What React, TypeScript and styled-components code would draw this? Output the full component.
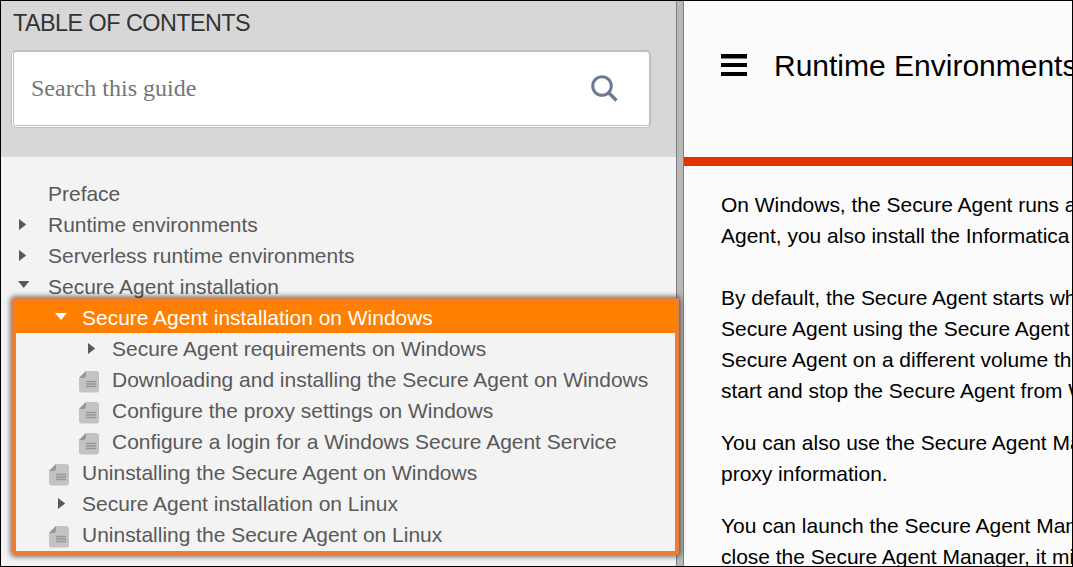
import React from "react";
import styled, { createGlobalStyle } from "styled-components";

const Global = createGlobalStyle`
  *, *::before, *::after { box-sizing: border-box; }
  body { margin: 0; overflow: hidden; }
`;

const Page = styled.div`
  position: relative;
  display: flex;
  width: 1073px;
  height: 567px;
  border: 1px solid #000;
  overflow: hidden;
  background: #fbfbfb;
  font-family: "Liberation Sans", Arial, sans-serif;
  font-size: 20.98px;
  line-height: 31px;
  white-space: nowrap;
`;

const Sidebar = styled.aside`
  flex: 0 0 675px;
  display: flex;
  flex-direction: column;
  background: #f3f3f3;
`;

const SidebarHeader = styled.header`
  flex: 0 0 156px;
  padding: 8px 0 0 10px;
  background: #d7d7d7;
`;

const SidebarTitle = styled.h2`
  margin: 0 0 13px;
  padding-left: 2px;
  font-size: 23.4px;
  font-weight: 400;
  line-height: 28px;
  letter-spacing: -0.55px;
  color: #333;
`;

const SearchBox = styled.label`
  display: flex;
  align-items: center;
  justify-content: space-between;
  width: 640px;
  height: 78px;
  padding: 0 31px 0 17px;
  border: 3px double #bac0ca;
  border-top: 2px solid #bac0ca;
  border-right: 2px solid #bac0ca;
  border-radius: 5px;
  background: #fff;
`;

const SearchInput = styled.input`
  width: 400px;
  padding: 0;
  border: 0;
  outline: 0;
  background: transparent;
  font: 24px "Liberation Serif", "Times New Roman", serif;
  &::placeholder { color: #757575; opacity: 1; }
`;

const SearchIcon = styled.svg`
  flex: none;
  margin-bottom: 2px;
`;

const Tree = styled.ul`
  margin: 0;
  padding: 21px 0 0;
  list-style: none;
`;

const TreeRow = styled.li<{ $level: number; $active?: boolean }>`
  display: flex;
  height: 31px;
  margin-left: ${(p) => (p.$active ? 13 : 0)}px;
  padding-left: ${(p) => [8, 42, 72][p.$level] - (p.$active ? 13 : 0)}px;
  background: ${(p) => (p.$active ? "#ff7f00" : "transparent")};
  color: ${(p) => (p.$active ? "#fff" : "#595959")};
`;

const Marker = styled.span`
  flex: none;
  width: 39px;
  height: 31px;
`;

const Divider = styled.div`
  flex: 0 0 8px;
  border: solid #808080;
  border-width: 0 1px;
  background: #b8b8b8;
`;

const Main = styled.main`
  flex: 1;
  min-width: 0;
  overflow: hidden;
`;

const Banner = styled.header`
  display: flex;
  align-items: center;
  gap: 27px;
  height: 165px;
  padding: 0 0 26px 37px;
  border-bottom: 9px solid #e13200;
`;

const MenuIcon = styled.svg`
  flex: none;
  margin-bottom: 2px;
`;

const Heading = styled.h1`
  margin: 0;
  font-size: 30px;
  font-weight: 400;
  line-height: 42px;
  color: #000;
`;

const Article = styled.article`
  padding: 23px 0 0 37px;
  color: #000;
`;

const Paragraph = styled.p<{ $gap?: number }>`
  margin: 0 0 ${(p) => p.$gap ?? 21}px;
`;

const Callout = styled.div`
  position: absolute;
  left: 11px;
  top: 297px;
  width: 667px;
  height: 257px;
  border: 4px solid #ed7d31;
  border-radius: 3px;
  box-shadow: 0 0 5px 2px rgba(0, 0, 0, 0.5);
  pointer-events: none;
`;

type Kind = "none" | "closed" | "open" | "page";

const MarkerIcon = ({ kind, level }: { kind: Kind; level: number }) => {
  if (kind === "none") return null;
  return (
    <svg width="39" height="31" viewBox="0 0 39 31" fill="currentColor" display="block">
      {kind === "closed" && <path d={level ? "M15 10v11l7.2-5.5z" : "M10 10v11l7.2-5.5z"} />}
      {kind === "open" && (
        <path d={level ? "M12 11h12l-6 7z" : "M9 10h11.4l-5.7 7z"} />
      )}
      {kind === "page" && (
        <g>
          <path d="M13 7h10.2a2.8 2.8 0 0 1 2.8 2.8v16a2.8 2.8 0 0 1-2.8 2.8H8.8a2.8 2.8 0 0 1-2.8-2.8V14z" fill="#c3c3c3" />
          <path d="M13 7v4a3 3 0 0 1-3 3H6z" fill="#969696" />
          <path d="M13 17.5h10.3M13 20h10.3M13 22.5h10.3" stroke="#969696" strokeWidth="1.5" />
        </g>
      )}
    </svg>
  );
};

const rows: { text: string; kind: Kind; level: number; active?: boolean }[] = [
  { text: "Preface", kind: "none", level: 0 },
  { text: "Runtime environments", kind: "closed", level: 0 },
  { text: "Serverless runtime environments", kind: "closed", level: 0 },
  { text: "Secure Agent installation", kind: "open", level: 0 },
  { text: "Secure Agent installation on Windows", kind: "open", level: 1, active: true },
  { text: "Secure Agent requirements on Windows", kind: "closed", level: 2 },
  { text: "Downloading and installing the Secure Agent on Windows", kind: "page", level: 2 },
  { text: "Configure the proxy settings on Windows", kind: "page", level: 2 },
  { text: "Configure a login for a Windows Secure Agent Service", kind: "page", level: 2 },
  { text: "Uninstalling the Secure Agent on Windows", kind: "page", level: 1 },
  { text: "Secure Agent installation on Linux", kind: "closed", level: 1 },
  { text: "Uninstalling the Secure Agent on Linux", kind: "page", level: 1 },
];

const paragraphs: { lines: string[]; gap?: number }[] = [
  { lines: ["On Windows, the Secure Agent runs a", "Agent, you also install the Informatica"], gap: 31 },
  {
    lines: [
      "By default, the Secure Agent starts wh",
      "Secure Agent using the Secure Agent",
      "Secure Agent on a different volume th",
      "start and stop the Secure Agent from W",
    ],
  },
  { lines: ["You can also use the Secure Agent Ma", "proxy information."] },
  { lines: ["You can launch the Secure Agent Man", "close the Secure Agent Manager, it mi"] },
];

export default function App() {
  return (
    <>
      <Global />
      <Page>
        <Sidebar>
          <SidebarHeader>
            <SidebarTitle>TABLE OF CONTENTS</SidebarTitle>
            <SearchBox>
              <SearchInput placeholder="Search this guide" />
              <SearchIcon width="28" height="28" viewBox="0 0 28 28" fill="none" stroke="#6c7d93" strokeWidth="3">
                <circle cx="12" cy="12" r="9.3" />
                <path d="M18.5 18.5l8 8" strokeWidth="3.4" />
              </SearchIcon>
            </SearchBox>
          </SidebarHeader>
          <Tree>
            {rows.map((row) => (
              <TreeRow key={row.text} $level={row.level} $active={row.active}>
                <Marker>
                  <MarkerIcon kind={row.kind} level={row.level} />
                </Marker>
                {row.text}
              </TreeRow>
            ))}
          </Tree>
        </Sidebar>
        <Divider />
        <Main>
          <Banner>
            <MenuIcon width="26" height="22" viewBox="0 0 26 22">
              <path d="M0 0h26v4.5H0zM0 9h26v4H0zM0 18h26v4H0z" />
            </MenuIcon>
            <Heading>Runtime Environments</Heading>
          </Banner>
          <Article>
            {paragraphs.map((p) => (
              <Paragraph key={p.lines[0]} $gap={p.gap}>
                {p.lines.map((line, i) => (
                  <React.Fragment key={line}>
                    {i > 0 && <br />}
                    {line}
                  </React.Fragment>
                ))}
              </Paragraph>
            ))}
          </Article>
        </Main>
        <Callout />
      </Page>
    </>
  );
}
